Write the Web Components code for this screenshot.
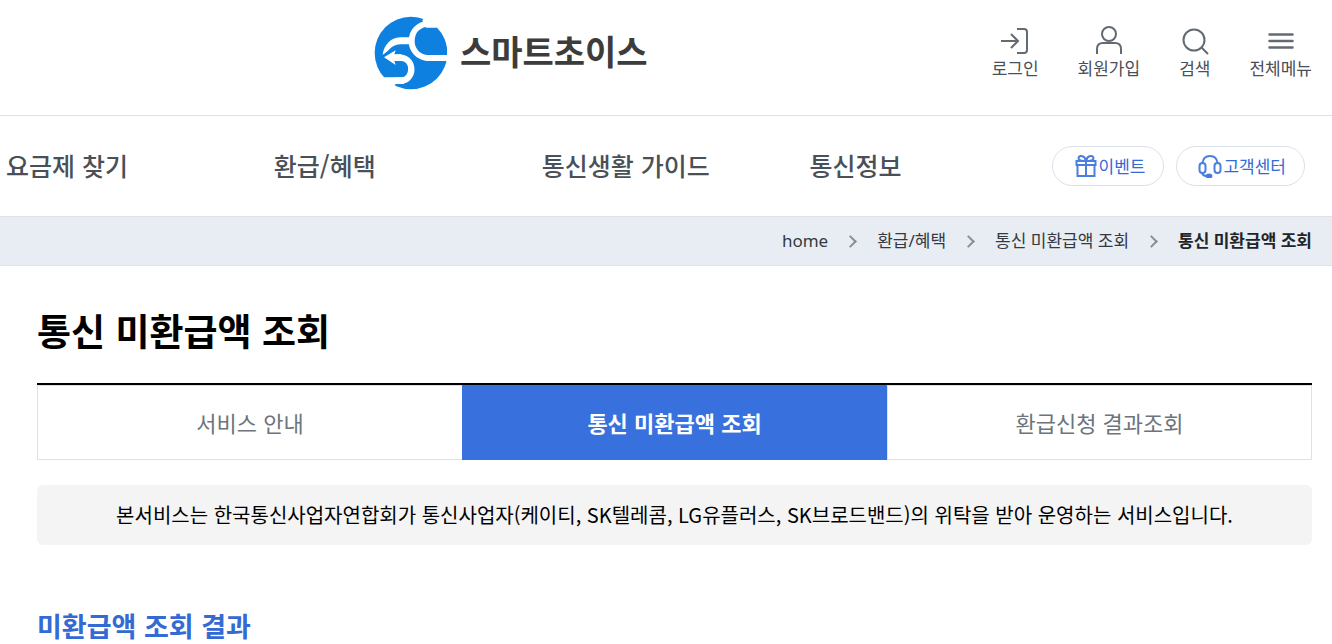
<!DOCTYPE html>
<html lang="ko">
<head>
<meta charset="UTF-8">
<meta name="viewport" content="width=device-width, initial-scale=1">
<title>통신 미환급액 조회 - 스마트초이스</title>
<style>
    body { margin: 0; background: #fff; color: #000; font-family: "Noto Sans CJK KR", "Noto Sans", sans-serif; }
</style>
</head>
<body>
<smart-page>
    <site-header slot="header"></site-header>
    <site-nav slot="header"></site-nav>
    <bread-crumb slot="header"></bread-crumb>
    <page-title>통신 미환급액 조회</page-title>
    <tab-menu></tab-menu>
    <notice-box>본서비스는 한국통신사업자연합회가 통신사업자(케이티, SK텔레콤, LG유플러스, SK브로드밴드)의 위탁을 받아 운영하는 서비스입니다.</notice-box>
    <section-title>미환급액 조회 결과</section-title>
</smart-page>

<script>
const ICONS = {
    login: '<path d="M1 15h17M11 8l7 7-7 7M17 3h7q3 0 3 3v18q0 3-3 3h-7"/>',
    join: '<circle cx="15" cy="8" r="7"/><path d="M3 28v-5q0-6 6-6h12q6 0 6 6v5"/>',
    search: '<circle cx="14" cy="14" r="10.5"/><path d="M21.5 21.5l6.5 6.5"/>',
    menu: '<path stroke-width="2.5" stroke-linecap="round" d="M3.5 8.5h23M3.5 15h23M3.5 21.5h23"/>',
    gift: '<path d="M2.5 7h19v4h-19zM3.5 11v11h17V11M12 7v15"/><path d="M11.5 7C8 7 4.5 6 4.5 4.2s2-2.700 4-2 3 2.300 3 4.800zM12.500 7c3.500 0 7-1 7-2.800s-2-2.700-4-2-3 2.300-3 4.800z"/>',
    headset: '<path d="M4.5 9C5 4.5 8 2 12 2s7 2.500 7.500 7M4 18c0 3 2 4 5 4"/><rect x="1.500" y="9" width="6" height="10" rx="3"/><rect x="16.500" y="9" width="6" height="10" rx="3"/><ellipse cx="11" cy="22" rx="2.500" ry="1.500" fill="currentColor"/>'
};

const define = (name, html) => {
    customElements.define(name, class extends HTMLElement {
        constructor() {
            super();
            this.attachShadow({ mode: 'open' }).innerHTML = html;
        }
    });
};

define('smart-page', `
    <style>
        :host { display: block; }
        main { padding: 38px 20px 0 37px; }
    </style>
    <header><slot name="header"></slot></header>
    <main><slot></slot></main>
`);

// Round emblem with the wordmark beside it
define('brand-logo', `
    <style>
        :host { display: block; }
        a { display: flex; align-items: center; gap: 13px; color: #3c3c3c; text-decoration: none; font-size: 34px; font-weight: 700; line-height: 48px; }
        svg { display: block; width: 74px; height: 74px; }
        span { padding-bottom: 4px; }
    </style>
    <a href="#">
        <svg viewBox="7 9 222 222" aria-hidden="true">
            <circle cx="121" cy="120" r="109" fill="#0d80e0"/>
            <g fill="#fff">
                <path d="M155 22L168 8H232L201 44H166Z"/>
                <path d="M120 73H88C60 74 40 96 36 125C53 118 60 95 88 94H120Z"/>
                <path d="M40 133L75 112L71 124H92V144H71L75 156Z"/>
                <path d="M43 193H20L60 225L76 213H100V193Z"/>
            </g>
            <g fill="none" stroke="#fff">
                <path stroke-width="18" d="M240 135H168C141 131 123 111 123 84C123 54 143 36 172 31"/>
                <path stroke-width="19" d="M74 134H90C132 137 132 199 93 203H72"/>
            </g>
        </svg>
        <span>스마트초이스</span>
    </a>
`);

class IconLink extends HTMLElement {
    constructor() {
        super();
        this.attachShadow({ mode: 'open' });
    }

    connectedCallback() {
        this.shadowRoot.innerHTML = `
            <style>
                :host { display: block; }
                button { display: flex; flex-direction: column; align-items: center; margin: 0; padding: 0; border: 0; background: none; color: #495057; font: inherit; font-size: 17px; line-height: 24px; cursor: pointer; white-space: nowrap; }
                svg { display: block; width: 30px; height: 30px; fill: none; stroke: #646a72; stroke-width: 2; }
            </style>
            <button type="button">
                <svg viewBox="0 0 30 30" aria-hidden="true">${ICONS[this.getAttribute('icon')]}</svg>
                <slot></slot>
            </button>
        `;
    }
}
customElements.define('icon-link', IconLink);

class PillLink extends HTMLElement {
    constructor() {
        super();
        this.attachShadow({ mode: 'open' });
    }

    connectedCallback() {
        this.shadowRoot.innerHTML = `
            <style>
                :host { display: block; }
                a { display: flex; align-items: center; gap: 1px; padding: 0 18px 0 21px; border: 1px solid #dbe1ea; border-radius: 20px; color: #346ad4; font-size: 17px; line-height: 38px; text-decoration: none; white-space: nowrap; }
                svg { display: block; width: 24px; height: 24px; fill: none; stroke: #4a7fe0; stroke-width: 2; }
            </style>
            <a href="#">
                <svg viewBox="0 0 24 24" aria-hidden="true">${ICONS[this.getAttribute('icon')]}</svg>
                <slot></slot>
            </a>
        `;
    }
}
customElements.define('pill-link', PillLink);

define('site-header', `
    <style>
        :host { display: flex; align-items: flex-start; justify-content: space-between; padding: 16px 20px 25px 28%; border-bottom: 1px solid #dee2e6; }
        .tools { display: flex; gap: 39px; padding-top: 10px; }
    </style>
    <brand-logo></brand-logo>
    <div class="tools">
        <icon-link icon="login">로그인</icon-link>
        <icon-link icon="join">회원가입</icon-link>
        <icon-link icon="search">검색</icon-link>
        <icon-link icon="menu">전체메뉴</icon-link>
    </div>
`);

define('site-nav', `
    <style>
        :host { display: flex; align-items: center; padding: 30px 27px 30px 6px; }
        nav { flex: 1; }
        ul { display: grid; grid-template-columns: repeat(3, 1fr) 242px; margin: 0; padding: 0 0 2px; list-style: none; }
        nav a { color: #495057; font-size: 25px; font-weight: 500; line-height: 38px; text-decoration: none; white-space: nowrap; }
        .pills { display: flex; gap: 12px; }
    </style>
    <nav>
        <ul>
            <li><a href="#">요금제 찾기</a></li>
            <li><a href="#">환급/혜택</a></li>
            <li><a href="#">통신생활 가이드</a></li>
            <li><a href="#">통신정보</a></li>
        </ul>
    </nav>
    <div class="pills">
        <pill-link icon="gift">이벤트</pill-link>
        <pill-link icon="headset">고객센터</pill-link>
    </div>
`);

define('bread-crumb', `
    <style>
        :host { display: block; border: solid #dee2e6; border-width: 1px 0; background: #e8edf4; font-family: "Noto Sans", "Noto Sans CJK KR", sans-serif; }
        ol { display: flex; justify-content: flex-end; margin: 0; padding: 0 20px; list-style: none; font-size: 17px; line-height: 48px; }
        li { display: flex; align-items: center; white-space: nowrap; }
        li + li::before { content: ""; width: 7px; height: 7px; margin: 0 22px 0 18px; border: solid #868e96; border-width: 2px 2px 0 0; transform: rotate(45deg); }
        a { color: #343a40; text-decoration: none; }
        [aria-current] { color: #212529; font-weight: 700; }
    </style>
    <nav aria-label="현재 위치">
        <ol>
            <li><a href="#">home</a></li>
            <li><a href="#">환급/혜택</a></li>
            <li><a href="#">통신 미환급액 조회</a></li>
            <li><a href="#" aria-current="page">통신 미환급액 조회</a></li>
        </ol>
    </nav>
`);

define('page-title', `
    <style>
        :host { display: block; margin-bottom: 27px; }
        h1 { margin: 0; font-size: 37px; font-weight: 700; line-height: 52px; }
    </style>
    <h1><slot></slot></h1>
`);

define('tab-menu', `
    <style>
        :host { display: block; margin-bottom: 25px; border-top: 2px solid #000; }
        nav { display: grid; grid-template-columns: repeat(3, 1fr); }
        a { border: 1px solid #dee2e6; color: #6c757d; font-size: 22px; line-height: 73px; text-align: center; text-decoration: none; }
        a:first-child { border-right: 0; }
        .on { border-color: #3871de; background: #3871de; color: #fff; font-weight: 700; }
    </style>
    <nav>
        <a href="#">서비스 안내</a>
        <a href="#" class="on" aria-current="page">통신 미환급액 조회</a>
        <a href="#">환급신청 결과조회</a>
    </nav>
`);

define('notice-box', `
    <style>
        :host { display: block; margin-bottom: 62px; border-radius: 6px; background: #f4f4f4; }
        p { margin: 0; padding: 14px 20px; font-size: 20px; line-height: 32px; text-align: center; }
    </style>
    <p><slot></slot></p>
`);

define('section-title', `
    <style>
        :host { display: block; }
        h2 { margin: 0; color: #346ad4; font-size: 27px; font-weight: 700; line-height: 37px; }
    </style>
    <h2><slot></slot></h2>
`);
</script>
</body>
</html>
